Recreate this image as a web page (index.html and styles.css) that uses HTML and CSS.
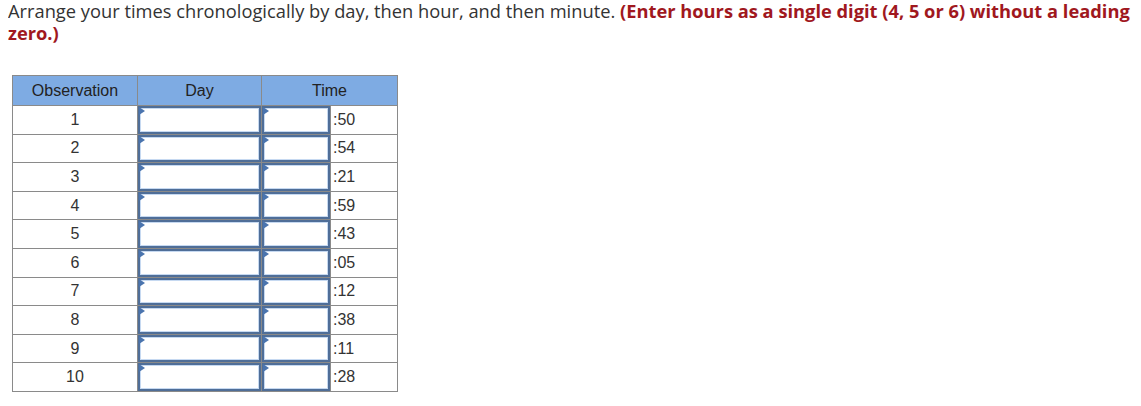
FILE: index.html
```html
<!DOCTYPE html>
<html>
<head>
<meta charset="utf-8">
<link rel="stylesheet" href="styles.css">
</head>
<body>
<p class="prompt">Arrange your times chronologically by day, then hour, and then minute. <strong class="hint">(Enter hours as a single digit (4, 5 or 6) without a leading zero.)</strong></p>
<table class="grid">
  <colgroup>
    <col class="c-obs"><col class="c-day"><col class="c-hour"><col class="c-min">
  </colgroup>
  <thead>
    <tr><th>Observation</th><th>Day</th><th colspan="2">Time</th></tr>
  </thead>
  <tbody>
    <tr><td class="obs">1</td><td class="in"><span class="mark"></span><input type="text"></td><td class="in"><span class="mark"></span><input type="text"></td><td class="min">:50</td></tr>
    <tr><td class="obs">2</td><td class="in"><span class="mark"></span><input type="text"></td><td class="in"><span class="mark"></span><input type="text"></td><td class="min">:54</td></tr>
    <tr><td class="obs">3</td><td class="in"><span class="mark"></span><input type="text"></td><td class="in"><span class="mark"></span><input type="text"></td><td class="min">:21</td></tr>
    <tr><td class="obs">4</td><td class="in"><span class="mark"></span><input type="text"></td><td class="in"><span class="mark"></span><input type="text"></td><td class="min">:59</td></tr>
    <tr><td class="obs">5</td><td class="in"><span class="mark"></span><input type="text"></td><td class="in"><span class="mark"></span><input type="text"></td><td class="min">:43</td></tr>
    <tr><td class="obs">6</td><td class="in"><span class="mark"></span><input type="text"></td><td class="in"><span class="mark"></span><input type="text"></td><td class="min">:05</td></tr>
    <tr><td class="obs">7</td><td class="in"><span class="mark"></span><input type="text"></td><td class="in"><span class="mark"></span><input type="text"></td><td class="min">:12</td></tr>
    <tr><td class="obs">8</td><td class="in"><span class="mark"></span><input type="text"></td><td class="in"><span class="mark"></span><input type="text"></td><td class="min">:38</td></tr>
    <tr><td class="obs">9</td><td class="in"><span class="mark"></span><input type="text"></td><td class="in"><span class="mark"></span><input type="text"></td><td class="min">:11</td></tr>
    <tr><td class="obs">10</td><td class="in"><span class="mark"></span><input type="text"></td><td class="in"><span class="mark"></span><input type="text"></td><td class="min">:28</td></tr>
  </tbody>
</table>
</body>
</html>
```

FILE: styles.css
```css
body {
  margin: 0 8px;
  background: #ffffff;
}

.prompt {
  margin: 0;
  font-family: "Open Sans", sans-serif;
  font-size: 18.3px;
  line-height: 22px;
  color: #333333;
}

.hint {
  font-weight: 700;
  color: #a0181e;
}

.grid {
  margin-top: 31px;
  margin-left: 4px;
  border-collapse: collapse;
  table-layout: fixed;
  width: 385px;
  font-family: "Liberation Sans", Arial, sans-serif;
  font-size: 16px;
  color: #333333;
}

.c-obs { width: 125px; }
.c-day { width: 124px; }
.c-hour { width: 69px; }
.c-min { width: 67px; }

.grid th {
  background: #7eabe3;
  font-weight: 400;
  height: 29px;
  padding: 0;
  border: 1px solid #8a8a8a;
  color: #222222;
}

.grid td {
  border: 1px solid #8a8a8a;
  padding: 0;
}

.grid td.obs {
  text-align: center;
}

.grid td.min {
  text-align: left;
  padding-left: 2px;
}

.grid td.in {
  position: relative;
}

.grid td.in input {
  display: block;
  box-sizing: border-box;
  width: 100%;
  height: 27.6px;
  margin: 0;
  border: 2px solid #4f6e98;
  box-shadow: inset 0 0 0 1px #c6d9f1;
  background: #ffffff;
  outline: none;
}

.mark {
  position: absolute;
  left: 1px;
  top: 1px;
  width: 0;
  height: 0;
  border-top: 4px solid transparent;
  border-bottom: 4px solid transparent;
  border-left: 6px solid #4a74ae;
}
```
